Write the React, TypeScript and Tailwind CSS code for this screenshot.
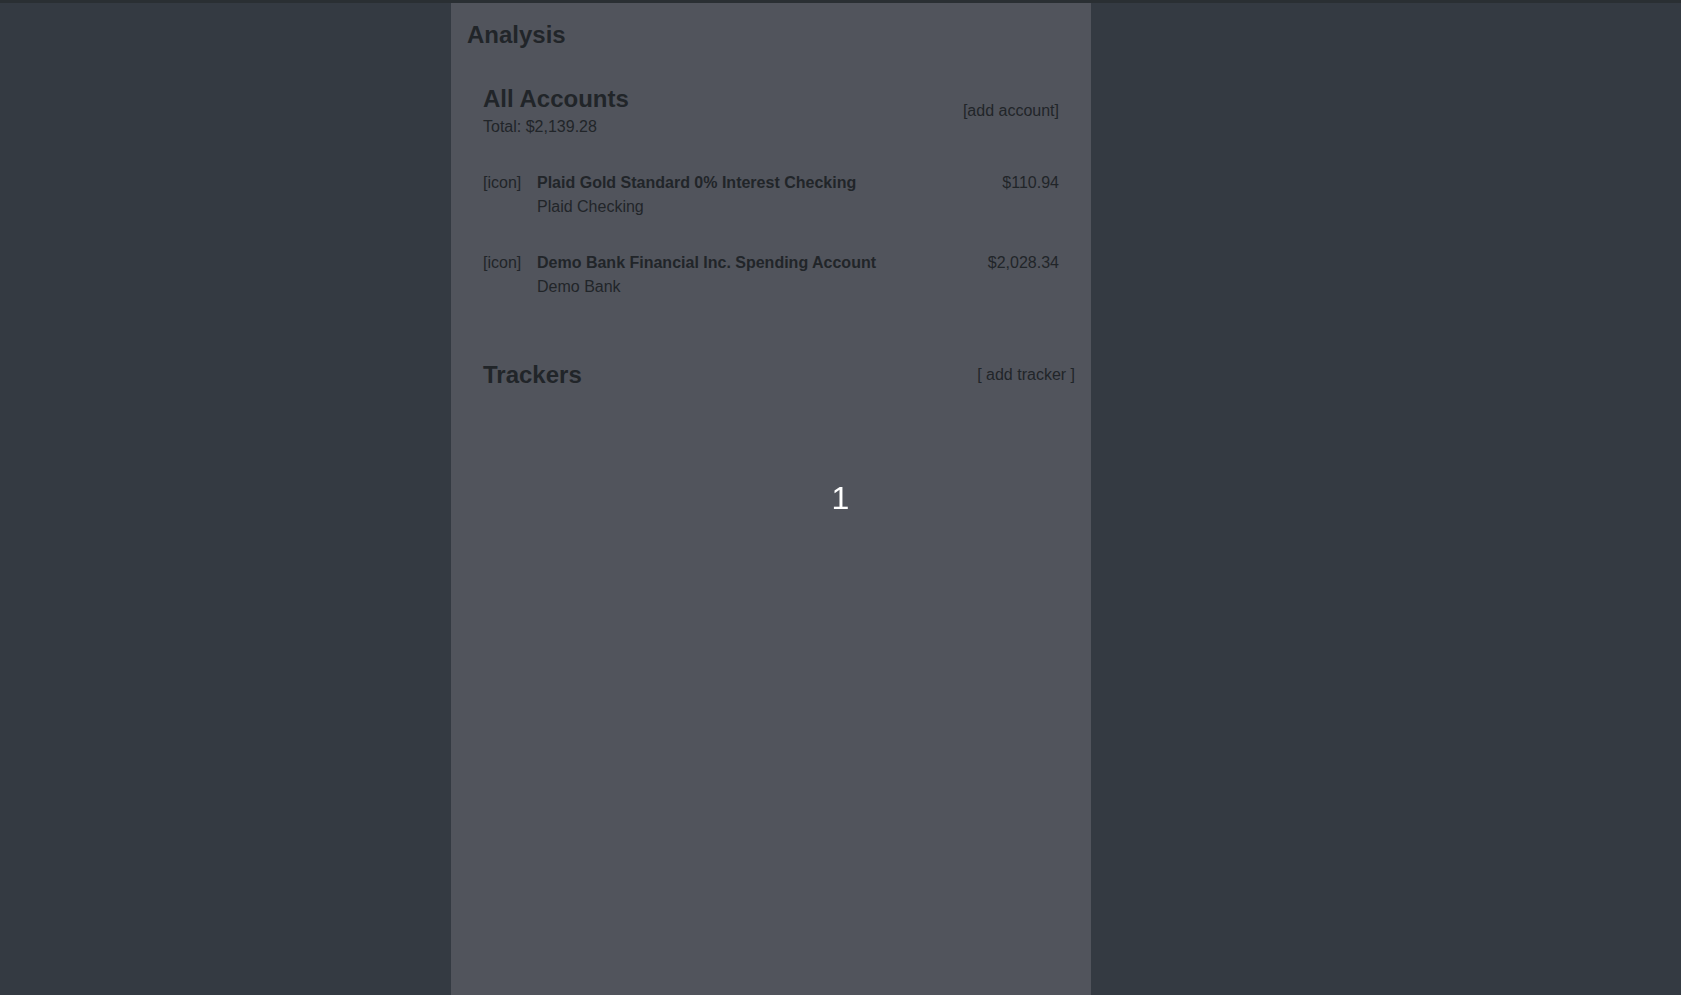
const accounts = [
  {
    name: "Plaid Gold Standard 0% Interest Checking",
    bank: "Plaid Checking",
    balance: "$110.94",
  },
  {
    name: "Demo Bank Financial Inc. Spending Account",
    bank: "Demo Bank",
    balance: "$2,028.34",
  },
];

const AccountRow = ({
  name,
  bank,
  balance,
}: {
  name: string;
  bank: string;
  balance: string;
}) => (
  <div className="flex items-start">
    <span className="w-[38px] shrink-0">[icon]</span>
    <div className="ml-4 flex-1">
      <p className="font-bold">{name}</p>
      <p>{bank}</p>
    </div>
    <span>{balance}</span>
  </div>
);

export default function App() {
  return (
    <div
      className="min-h-screen bg-[#343a42] text-[16px] leading-6 text-[#212529]"
      style={{ fontFamily: '"Liberation Sans", Arial, sans-serif' }}
    >
      <div className="h-[3px] bg-[#2a2f33]" />
      <div className="flex min-h-[992px]">
        <div className="w-[451px] shrink-0" />
        <main className="w-[640px] shrink-0 bg-[#51545c] px-4 pt-[16px]">
          <h1 className="text-[24px] font-bold leading-[31px]">Analysis</h1>

          <section className="mt-[33px] px-4">
            <div className="flex items-center justify-between">
              <div>
                <h2 className="text-[24px] font-bold leading-[31px]">All Accounts</h2>
                <p className="mt-px">Total: $2,139.28</p>
              </div>
              <button className="leading-6">[add account]</button>
            </div>

            <div className="mt-8 flex flex-col gap-8">
              {accounts.map((a) => (
                <AccountRow key={a.name} {...a} />
              ))}
            </div>
          </section>

          <section className="mt-[60px] pl-4">
            <div className="flex items-center justify-between">
              <h2 className="text-[24px] font-bold leading-[31px]">Trackers</h2>
              <button className="leading-6">[ add tracker ]</button>
            </div>
          </section>
        </main>
      </div>

      <div className="fixed left-1/2 top-[482px] -translate-x-1/2 text-[32px] leading-8 text-white">
        1
      </div>
    </div>
  );
}
